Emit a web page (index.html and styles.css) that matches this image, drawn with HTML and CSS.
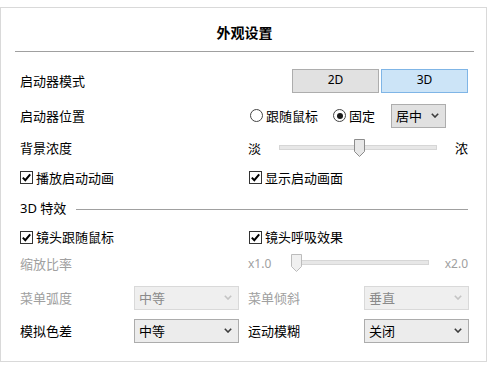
FILE: index.html
```html
<!DOCTYPE html>
<html lang="zh">
<head>
<meta charset="utf-8">
<link rel="stylesheet" href="styles.css">
</head>
<body>
<div class="frame">
  <div class="title">外观设置</div>
  <div class="rows">
    <div class="row r1">
      <div class="cell">启动器模式</div>
      <div class="cell end">
        <div class="btn">2D</div>
        <div class="btn on">3D</div>
      </div>
    </div>
    <div class="row r2">
      <div class="cell">启动器位置</div>
      <div class="cell">
        <span class="radio"></span><span class="rtext">跟随鼠标</span>
        <span class="radio sel"></span><span class="rtext">固定</span>
        <div class="select small"><span>居中</span><svg class="arrow" width="8" height="5" viewBox="0 0 8 5"><path d="M0.8 0.8 L4 4 L7.2 0.8" fill="none" stroke="#3c3c3c" stroke-width="1.6"/></svg></div>
      </div>
    </div>
    <div class="row r3">
      <div class="cell">背景浓度</div>
      <div class="cell">
        <span>淡</span>
        <div class="track t1"><svg class="thumb th1" width="11" height="18" viewBox="0 0 11 18"><path d="M0.5 0.5 H10.5 V12.5 L5.5 17.5 L0.5 12.5 Z" fill="#e8e8e8" stroke="#8c8c8c"/></svg></div>
        <span class="far">浓</span>
      </div>
    </div>
    <div class="row r4">
      <div class="cell"><svg class="cb" width="13" height="13" viewBox="0 0 13 13"><rect x="0.5" y="0.5" width="12" height="12" fill="#fff" stroke="#333"/><path d="M2.8 6.6 L5.3 9.2 L10.2 3.4" fill="none" stroke="#000" stroke-width="2"/></svg><span class="ctext">播放启动动画</span></div>
      <div class="cell"><svg class="cb cbr" width="13" height="13" viewBox="0 0 13 13"><rect x="0.5" y="0.5" width="12" height="12" fill="#fff" stroke="#333"/><path d="M2.8 6.6 L5.3 9.2 L10.2 3.4" fill="none" stroke="#000" stroke-width="2"/></svg><span class="ctext">显示启动画面</span></div>
    </div>
    <div class="row r5">
      <div class="section"><span>3D 特效</span><div class="sline"></div></div>
    </div>
    <div class="row r6">
      <div class="cell"><svg class="cb" width="13" height="13" viewBox="0 0 13 13"><rect x="0.5" y="0.5" width="12" height="12" fill="#fff" stroke="#333"/><path d="M2.8 6.6 L5.3 9.2 L10.2 3.4" fill="none" stroke="#000" stroke-width="2"/></svg><span class="ctext">镜头跟随鼠标</span></div>
      <div class="cell"><svg class="cb cbr" width="13" height="13" viewBox="0 0 13 13"><rect x="0.5" y="0.5" width="12" height="12" fill="#fff" stroke="#333"/><path d="M2.8 6.6 L5.3 9.2 L10.2 3.4" fill="none" stroke="#000" stroke-width="2"/></svg><span class="ctext">镜头呼吸效果</span></div>
    </div>
    <div class="row r7 dis">
      <div class="cell">缩放比率</div>
      <div class="cell">
        <span class="latin">x1.0</span>
        <div class="track t2"><svg class="thumb th2" width="11" height="18" viewBox="0 0 11 18"><path d="M0.5 0.5 H10.5 V12.5 L5.5 17.5 L0.5 12.5 Z" fill="#f0f0f0" stroke="#bcbcbc"/></svg></div>
        <span class="latin far2">x2.0</span>
      </div>
    </div>
    <div class="row r8">
      <div class="cell split"><span class="gray">菜单弧度</span><div class="select wide disabled"><span>中等</span><svg class="arrow" width="8" height="5" viewBox="0 0 8 5"><path d="M0.8 0.8 L4 4 L7.2 0.8" fill="none" stroke="#c4c4c4" stroke-width="1.6"/></svg></div></div>
      <div class="cell split2"><span class="gray">菜单倾斜</span><div class="select wide disabled"><span>垂直</span><svg class="arrow" width="8" height="5" viewBox="0 0 8 5"><path d="M0.8 0.8 L4 4 L7.2 0.8" fill="none" stroke="#c4c4c4" stroke-width="1.6"/></svg></div></div>
    </div>
    <div class="row r9">
      <div class="cell split"><span>模拟色差</span><div class="select wide"><span>中等</span><svg class="arrow" width="8" height="5" viewBox="0 0 8 5"><path d="M0.8 0.8 L4 4 L7.2 0.8" fill="none" stroke="#3c3c3c" stroke-width="1.6"/></svg></div></div>
      <div class="cell split2"><span>运动模糊</span><div class="select wide"><span>关闭</span><svg class="arrow" width="8" height="5" viewBox="0 0 8 5"><path d="M0.8 0.8 L4 4 L7.2 0.8" fill="none" stroke="#3c3c3c" stroke-width="1.6"/></svg></div></div>
    </div>
  </div>
</div>
</body>
</html>
```

FILE: styles.css
```css
html, body {
  margin: 0;
  padding: 0;
  background: #fff;
}
body {
  font-family: "Noto Sans CJK SC", "Noto Sans", sans-serif;
  font-size: 13px;
  color: #000;
  line-height: 1.2;
}
.frame {
  margin-top: 7px;
  width: 485px;
  height: 353px;
  border: 1px solid #d9d9d9;
}
.title {
  margin: 0 12px 0 14px;
  height: 38px;
  padding-top: 5px;
  line-height: 38px;
  text-align: center;
  font-weight: bold;
  font-size: 14px;
  border-bottom: 1px solid #a0a0a0;
}
.rows {
  margin-top: 11px;
  padding-left: 19px;
}
.row {
  display: grid;
  grid-template-columns: 228px 220px;
  align-items: center;
}
.r1 { height: 35px; }
.r2 { height: 35px; }
.r3 { height: 30px; }
.r4 { height: 29px; }
.r5 { height: 34px; display: flex; }
.r6 { height: 22px; }
.r7 { height: 32px; }
.r8 { height: 35px; }
.r9 { height: 31px; }
.cell {
  display: flex;
  align-items: center;
}
.end { justify-content: flex-end; }
.btn {
  width: 85px;
  height: 22px;
  border: 1px solid #adadad;
  background: #e1e1e1;
  display: flex;
  align-items: center;
  justify-content: center;
  font-family: "Noto Sans", sans-serif;
  font-size: 12px;
  margin-left: 2px;
}
.btn.on {
  background: #cce4f7;
  border-color: #7fb5e6;
}
.radio {
  width: 11px;
  height: 11px;
  border: 1px solid #444;
  border-radius: 50%;
  margin-left: 2px;
  position: relative;
  box-sizing: content-box;
  background: #fff;
}
.radio.sel { margin-left: 15px; }
.radio.sel::after {
  content: "";
  position: absolute;
  left: 2.5px;
  top: 2.5px;
  width: 6px;
  height: 6px;
  border-radius: 50%;
  background: #1a1a1a;
}
.rtext { margin-left: 3px; }
.select {
  height: 22px;
  border: 1px solid #adadad;
  background: #e5e5e5;
  display: flex;
  align-items: center;
  justify-content: space-between;
  padding: 0 6px 0 4px;
  box-sizing: content-box;
}
.select.small {
  width: 43px;
  margin-left: 16px;
  background: #e1e1e1;
}
.select.wide {
  width: 93px;
  background: #ececec;
  border-color: #acacac;
}
.select.disabled {
  background: #efefef;
  border-color: #d9d9d9;
  color: #8a8a8a;
}
.arrow { display: block; }
.track {
  position: relative;
  height: 3px;
  background: #e7e7e7;
  border: 1px solid #d6d6d6;
  margin-top: -2px;
}
.t1 { width: 157px; margin-left: 18px; }
.t2 { width: 140px; margin-left: 22px; }
.thumb {
  position: absolute;
  top: -7px;
  display: block;
}
.th1 { left: 74px; }
.th2 { left: -3px; }
.far { margin-left: 18px; }
.far2 { margin-left: 16px; }
.latin {
  font-family: "Noto Sans", sans-serif;
  font-size: 12px;
}
.dis { color: #a0a0a0; }
.gray { color: #a0a0a0; }
.cb { display: block; }
.cbr { margin-left: 1px; }
.ctext { margin-left: 3px; }
.section {
  display: flex;
  align-items: center;
  width: 448px;
}
.section span {
  font-family: "Noto Sans", "Noto Sans CJK SC", sans-serif;
}
.sline {
  flex: 1;
  height: 1px;
  background: #a0a0a0;
  margin-left: 10px;
}
.split { display: grid; grid-template-columns: 114px 105px; align-items: center; }
.split2 { display: grid; grid-template-columns: 116px 105px; align-items: center; }
.split .select, .split2 .select { width: 93px; }
```
